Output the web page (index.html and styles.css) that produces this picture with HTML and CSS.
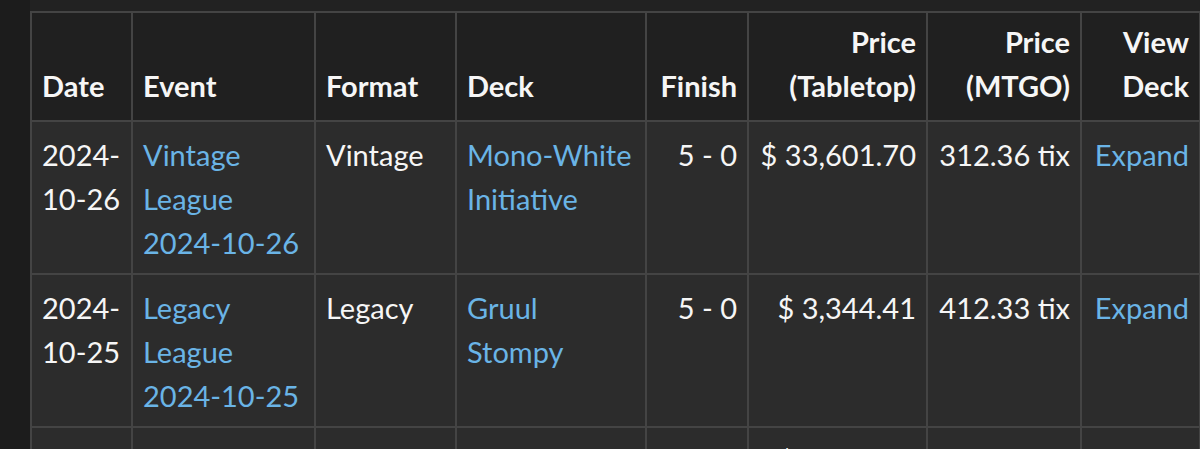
FILE: index.html
```html
<!DOCTYPE html>
<html>
<head>
<meta charset="utf-8">
<link rel="stylesheet" href="styles.css">
</head>
<body>
<div class="wrap">
<table class="results">
  <colgroup>
    <col class="c-date"><col class="c-event"><col class="c-format"><col class="c-deck"><col class="c-finish"><col class="c-tt"><col class="c-mtgo"><col class="c-view">
  </colgroup>
  <thead>
    <tr>
      <th>Date</th>
      <th>Event</th>
      <th>Format</th>
      <th>Deck</th>
      <th class="num">Finish</th>
      <th class="num">Price<br>(Tabletop)</th>
      <th class="num">Price<br>(MTGO)</th>
      <th class="num">View<br>Deck</th>
    </tr>
  </thead>
  <tbody>
    <tr>
      <td class="date">2024-10-26</td>
      <td><a href="#">Vintage League 2024-10-26</a></td>
      <td>Vintage</td>
      <td><a href="#">Mono-White Initiative</a></td>
      <td class="num nw">5 - 0</td>
      <td class="num nw">$ 33,601.70</td>
      <td class="num nw">312.36 tix</td>
      <td class="num"><a href="#">Expand</a></td>
    </tr>
    <tr>
      <td class="date">2024-10-25</td>
      <td><a href="#">Legacy League 2024-10-25</a></td>
      <td>Legacy</td>
      <td><a href="#">Gruul Stompy</a></td>
      <td class="num nw">5 - 0</td>
      <td class="num nw">$ 3,344.41</td>
      <td class="num nw">412.33 tix</td>
      <td class="num"><a href="#">Expand</a></td>
    </tr>
    <tr>
      <td class="date">2024-10-24</td>
      <td><a href="#">Modern League 2024-10-24</a></td>
      <td>Modern</td>
      <td><a href="#">Boros Energy</a></td>
      <td class="num nw">5 - 0</td>
      <td class="num nw">$ 2,514.77</td>
      <td class="num nw">218.40 tix</td>
      <td class="num"><a href="#">Expand</a></td>
    </tr>
  </tbody>
</table>
</div>
</body>
</html>
```
FILE: styles.css
```css
html, body {
  margin: 0;
  padding: 0;
  background: #1c1c1c;
}
.wrap {
  margin-left: 30px;
  padding-top: 11px;
  background: #222222;
  overflow: hidden;
  height: 449px;
  box-sizing: border-box;
}
.results {
  border-collapse: collapse;
  table-layout: fixed;
  width: 1169px;
  font-family: Lato, "Open Sans", sans-serif;
  font-size: 29px;
  line-height: 44px;
  color: #f6f6f6;
}
.c-date { width: 101px; }
.c-event { width: 183px; }
.c-format { width: 141px; }
.c-deck { width: 190px; }
.c-finish { width: 102px; }
.c-tt { width: 179px; }
.c-mtgo { width: 154px; }
.c-view { width: 119px; }
.results th, .results td {
  border: 2px solid #444444;
  text-align: left;
}
.results th {
  padding: 7px 10px 12px;
  background: #202020;
  font-weight: bold;
  vertical-align: bottom;
}
.results td {
  padding: 11px 10px 8px;
  background: #2c2c2c;
  vertical-align: top;
}
.results td.date { padding-right: 4px; }
.results .num { text-align: right; }
.results td.nw { white-space: nowrap; padding-left: 4px; }
.results a {
  color: #6ab4e6;
  text-decoration: none;
}
```
